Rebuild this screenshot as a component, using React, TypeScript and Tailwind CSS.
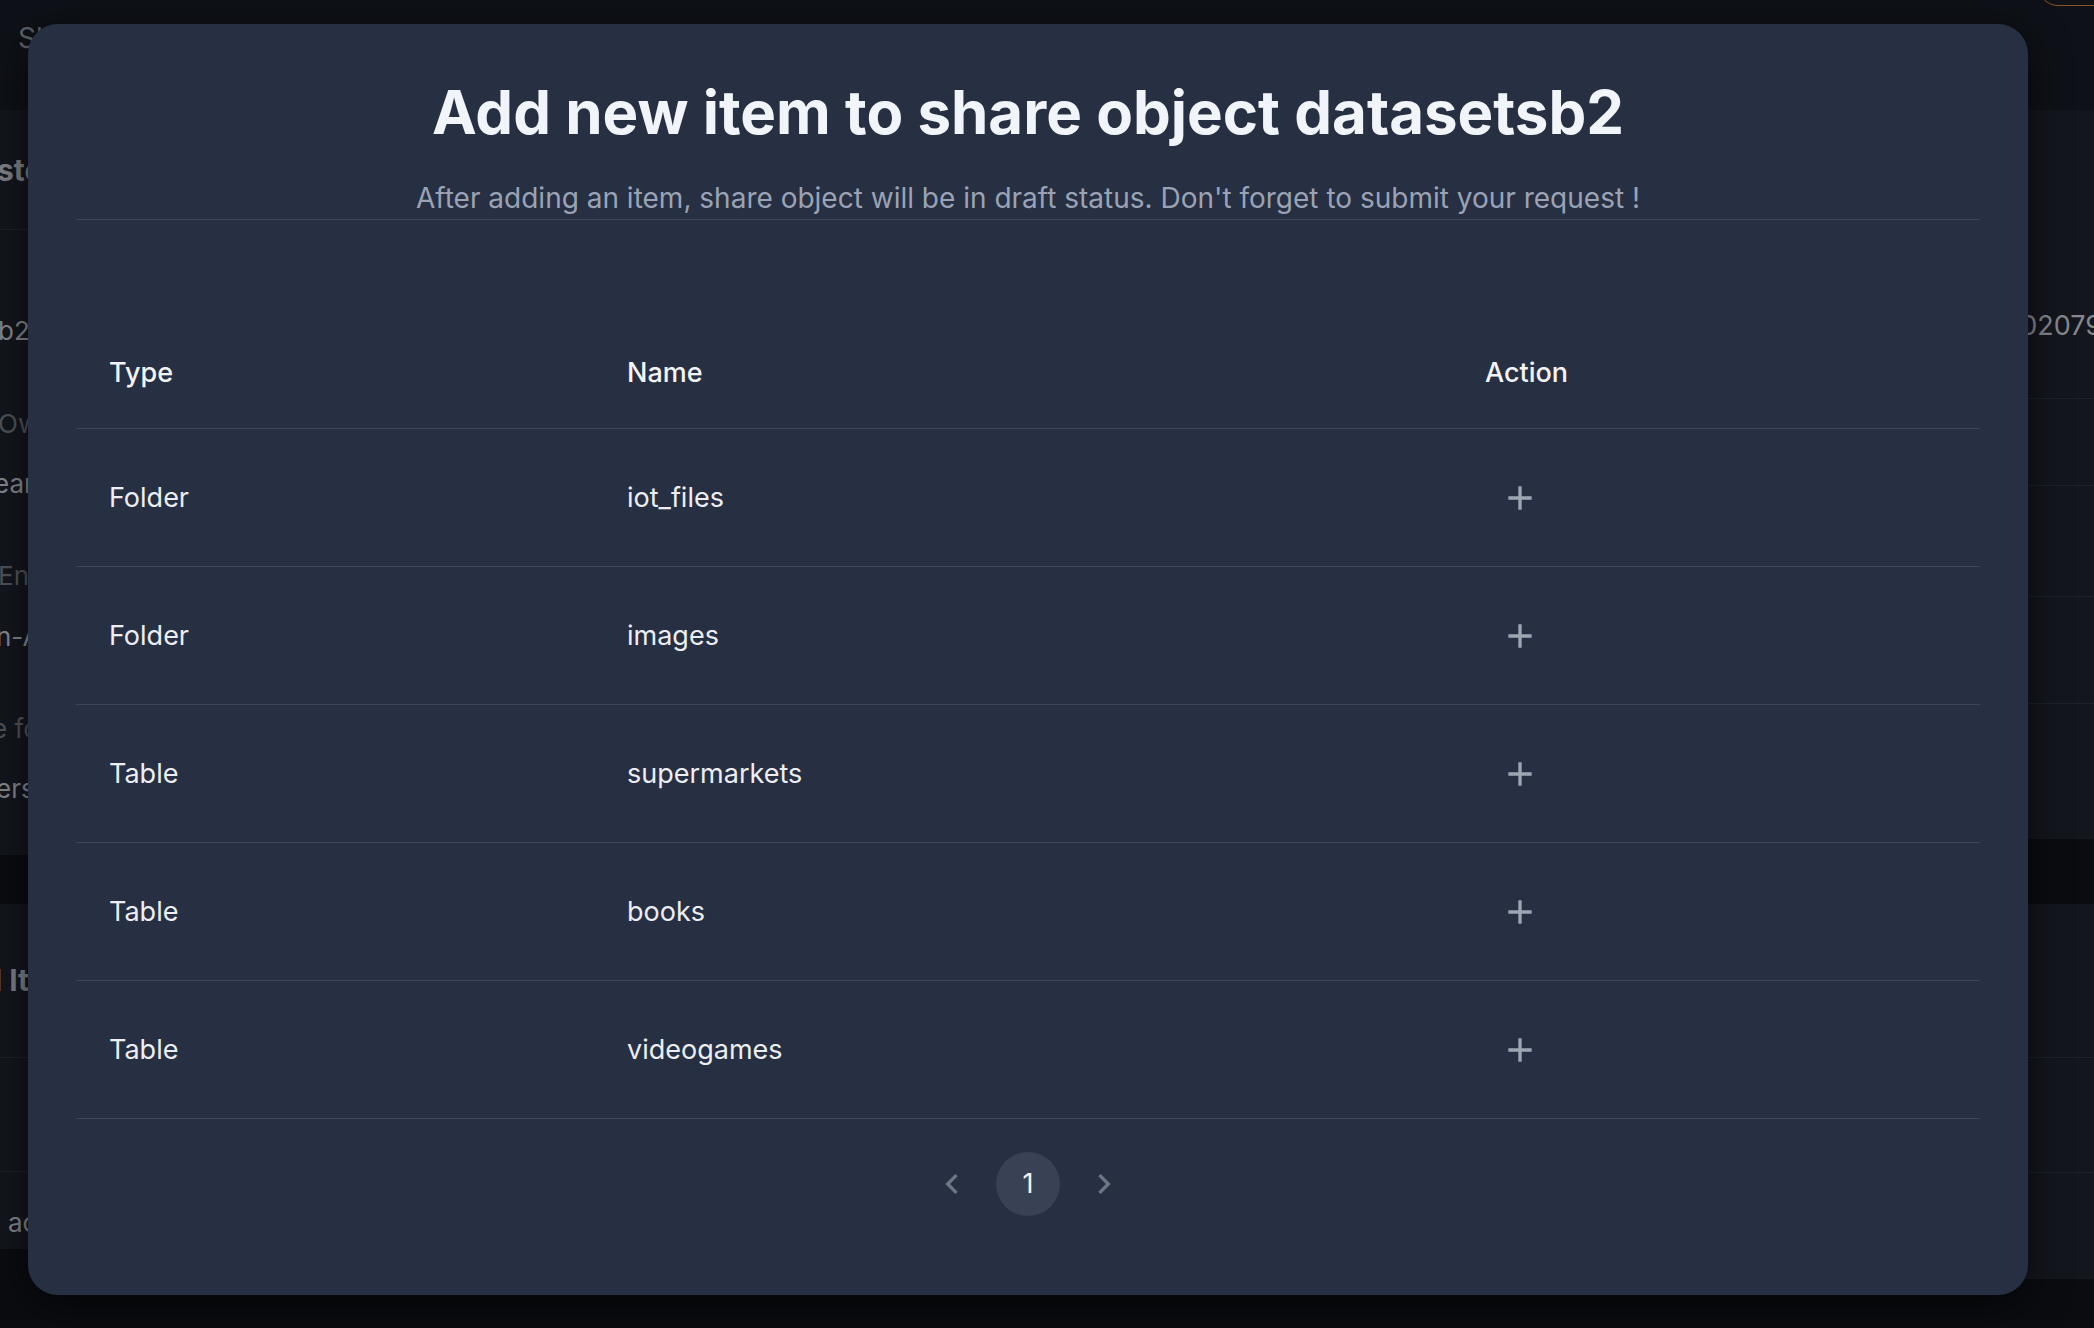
import React from 'react';
import { MdAdd, MdChevronLeft, MdChevronRight } from 'react-icons/md';

const items = [
  { type: 'Folder', name: 'iot_files' },
  { type: 'Folder', name: 'images' },
  { type: 'Table', name: 'supermarkets' },
  { type: 'Table', name: 'books' },
  { type: 'Table', name: 'videogames' }
];

function BackgroundPage() {
  return (
    <div className="flex h-full flex-col">
      {/* top bar */}
      <div className="flex h-[110px] shrink-0 bg-[#0e1117]">
        <span className="ml-[18px] mt-[22px] text-[28px] leading-[32px] text-[#5f636b]">Shares</span>
        <div className="ml-auto -mr-[40px] -mt-[34px] h-[40px] w-[96px] rounded-full border border-[#8a5524]" />
      </div>

      <div className="flex flex-1">
        {/* left column */}
        <div className="flex w-[1000px] flex-col">
          <div className="flex h-[745px] flex-col bg-[#13161d] text-[26px] leading-[32px] text-[#85888f]">
            <div className="flex h-[120px] items-center border-b border-[#1e222a]">
              <span className="-ml-[3px] text-[30px] font-bold text-[#7d8087]">ster</span>
            </div>
            <div className="-ml-[2px] flex h-[117px] items-end">b2</div>
            <div className="-ml-[2px] flex h-[93px] items-end text-[#4f535a]">Owner</div>
            <div className="-ml-[6px] flex h-[60px] items-end">earn</div>
            <div className="-ml-[2px] flex h-[92px] items-end text-[#4f535a]">Environment</div>
            <div className="-ml-[4px] flex h-[61px] items-end">n-AWS</div>
            <div className="-ml-[8px] flex h-[92px] items-end text-[#4f535a]">e for</div>
            <div className="-ml-[4px] flex h-[60px] items-end">ers</div>
          </div>
          <div className="h-[49px]" />
          <div className="flex h-[345px] flex-col bg-[#13161d] text-[26px] text-[#85888f]">
            <div className="flex h-[154px] items-center border-b border-[#1e222a]">
              <span className="-ml-[6px] text-[30px] font-bold text-[#7d8087]">l Items</span>
            </div>
            <div className="h-[114px] border-b border-[#1e222a]" />
            <div className="flex h-[76px] items-end pb-[6px]">
              <span className="ml-[8px]">actions</span>
            </div>
          </div>
        </div>

        {/* right column */}
        <div className="flex flex-1 flex-col">
          <div className="flex h-[729px] flex-col bg-[#13161d] text-[27px] text-[#85888f]">
            <div className="flex h-[288px] items-end justify-end pb-[52px]">
              <span className="-mr-[8px]">1202079</span>
            </div>
            <div className="h-[87px] border-t border-[#1e222a]" />
            <div className="h-[111px] border-t border-[#1e222a]" />
            <div className="h-[107px] border-t border-[#1e222a]" />
            <div className="flex-1 border-t border-[#1e222a]" />
          </div>
          <div className="h-[65px]" />
          <div className="flex h-[375px] flex-col bg-[#13161d]">
            <div className="h-[153px]" />
            <div className="h-[115px] border-t border-[#1e222a]" />
            <div className="flex-1 border-t border-[#1e222a]" />
          </div>
        </div>
      </div>
    </div>
  );
}

export default function App() {
  return (
    <div className="relative h-[1328px] w-full overflow-hidden bg-[#0a0c10] font-['Inter',sans-serif]">
      <BackgroundPage />

      {/* dialog */}
      <div className="absolute left-[28px] top-[24px] flex h-[1271px] w-[2000px] flex-col rounded-[30px] bg-[#272f42] px-[48px] pt-[52px] shadow-[0_10px_40px_rgba(0,0,0,0.6)]">
        <h2 className="text-center text-[60px] font-bold leading-[72px] text-[#f1f4f9]">
          Add new item to share object datasetsb2
        </h2>
        <p className="mt-[34px] text-center text-[28px] leading-[32px] text-[#9aa3b5]">
          After adding an item, share object will be in draft status. Don't forget to submit your request !
        </p>
        <div className="mt-[5px] h-px bg-[#3e4658]" />

        <div className="mt-[71px]">
          <div className="grid h-[138px] grid-cols-[518px_858px_1fr] items-end border-b border-[#3e4658] pb-[39px] text-[27px] font-medium leading-[32px] text-[#f3f4f7]">
            <div className="px-[33px]">Type</div>
            <div className="px-[33px]">Name</div>
            <div className="px-[33px]">Action</div>
          </div>
          {items.map((item) => (
            <div
              key={item.name}
              className="grid h-[138px] grid-cols-[518px_858px_1fr] items-center border-b border-[#3e4658] text-[27px] leading-[32px] text-[#eceef3]"
            >
              <div className="px-[33px]">{item.type}</div>
              <div className="px-[33px]">{item.name}</div>
              <div className="px-[33px]">
                <button type="button" className="flex w-[70px] justify-center text-[#9ea5b3]">
                  <MdAdd size={40} />
                </button>
              </div>
            </div>
          ))}
        </div>

        <div className="mt-[33px] flex justify-center gap-[12px]">
          <button type="button" className="flex h-[64px] w-[64px] items-center justify-center text-[#6f7786]">
            <MdChevronLeft size={40} />
          </button>
          <button
            type="button"
            className="flex h-[64px] w-[64px] items-center justify-center rounded-full bg-[#394254] text-[27px] text-[#f3f4f7]"
          >
            1
          </button>
          <button type="button" className="flex h-[64px] w-[64px] items-center justify-center text-[#6f7786]">
            <MdChevronRight size={40} />
          </button>
        </div>
      </div>
    </div>
  );
}
